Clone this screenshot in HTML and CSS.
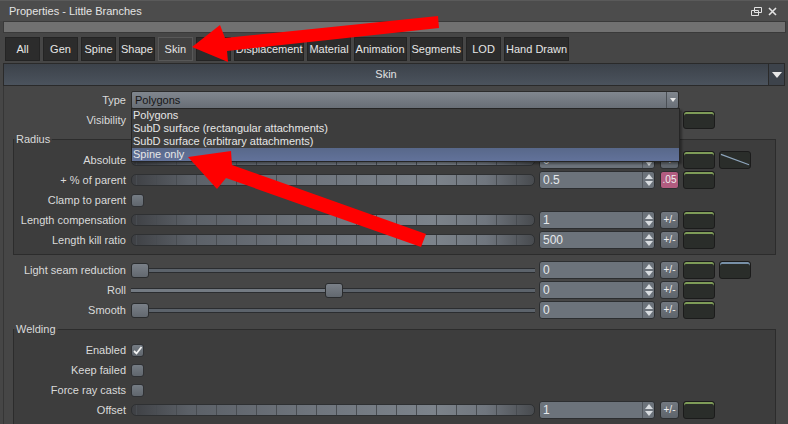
FILE: index.html
```html
<!DOCTYPE html>
<html>
<head>
    <title>Properties - Little Branches</title>
    <link rel="stylesheet" href="styles.css">
</head>
<body>
<div class="window">
    <div class="titlebar">
        <span class="title">Properties - Little Branches</span>
        <span class="win-buttons">
            <svg width="11" height="9" viewBox="0 0 11 9"><path d="M3.5 .5h7v5h-7z M.5 3.5h7v5h-7z" fill="none" stroke="#e2e2e2"/></svg>
            <svg width="9" height="9" viewBox="0 0 9 9"><path d="M1 1l7 7M8 1l-7 7" stroke="#e2e2e2" stroke-width="1.6"/></svg>
        </span>
    </div>
    <div class="topbar"></div>

    <div class="tabs">
        <button class="tab">All</button>
        <button class="tab">Gen</button>
        <button class="tab">Spine</button>
        <button class="tab">Shape</button>
        <button class="tab active">Skin</button>
        <button class="tab"></button>
        <button class="tab">Displacement</button>
        <button class="tab">Material</button>
        <button class="tab">Animation</button>
        <button class="tab">Segments</button>
        <button class="tab">LOD</button>
        <button class="tab">Hand Drawn</button>
    </div>

    <div class="section-head">
        <span class="section-title">Skin</span>
        <span class="head-drop"><span class="tri-down big"></span></span>
    </div>

    <div class="panel">
        <div class="row">
            <label class="lbl">Type</label>
            <div class="combo"><span class="combo-text">Polygons</span><span class="combo-arrow"><span class="tri-down"></span></span></div>
        </div>
        <div class="row">
            <label class="lbl">Visibility</label>
            <div class="combo"><span class="combo-text"></span><span class="combo-arrow"></span></div>
            <span class="key"></span>
        </div>

        <fieldset class="group">
            <legend>Radius</legend>
            <div class="row">
                <label class="lbl">Absolute</label>
                <div class="bar"></div>
                <div class="spin"><span class="spin-value">0</span><span class="spin-arrows"><i class="up"></i><i class="down"></i></span></div>
                <span class="pm">+/-</span>
                <span class="key"></span>
                <span class="key curve"><svg width="32" height="16" viewBox="0 0 32 16"><path d="M1 2L31 13" stroke="#8fa6bd" stroke-width="1.2"/></svg></span>
            </div>
            <div class="row">
                <label class="lbl">+ % of parent</label>
                <div class="bar"></div>
                <div class="spin"><span class="spin-value">0.5</span><span class="spin-arrows"><i class="up"></i><i class="down"></i></span></div>
                <span class="pm pink">.05</span>
                <span class="key"></span>
            </div>
            <div class="row">
                <label class="lbl">Clamp to parent</label>
                <span class="check"></span>
            </div>
            <div class="row">
                <label class="lbl">Length compensation</label>
                <div class="bar"></div>
                <div class="spin"><span class="spin-value">1</span><span class="spin-arrows"><i class="up"></i><i class="down"></i></span></div>
                <span class="pm">+/-</span>
                <span class="key"></span>
            </div>
            <div class="row">
                <label class="lbl">Length kill ratio</label>
                <div class="bar"></div>
                <div class="spin"><span class="spin-value">500</span><span class="spin-arrows"><i class="up"></i><i class="down"></i></span></div>
                <span class="pm">+/-</span>
                <span class="key"></span>
            </div>
        </fieldset>

        <div class="row">
            <label class="lbl">Light seam reduction</label>
            <div class="slider"><span class="handle"></span></div>
            <div class="spin"><span class="spin-value">0</span><span class="spin-arrows"><i class="up"></i><i class="down"></i></span></div>
            <span class="pm">+/-</span>
            <span class="key"></span>
            <span class="key blue"></span>
        </div>
        <div class="row">
            <label class="lbl">Roll</label>
            <div class="slider filled"><span class="handle" style="margin-left: 194px"></span></div>
            <div class="spin"><span class="spin-value">0</span><span class="spin-arrows"><i class="up"></i><i class="down"></i></span></div>
            <span class="pm">+/-</span>
            <span class="key"></span>
        </div>
        <div class="row">
            <label class="lbl">Smooth</label>
            <div class="slider"><span class="handle"></span></div>
            <div class="spin"><span class="spin-value">0</span><span class="spin-arrows"><i class="up"></i><i class="down"></i></span></div>
            <span class="pm">+/-</span>
            <span class="key"></span>
        </div>

        <fieldset class="group">
            <legend>Welding</legend>
            <div class="row">
                <label class="lbl">Enabled</label>
                <span class="check"><svg width="11" height="11" viewBox="0 0 11 11"><path d="M2 6l2.5 2.5L9.5 2" fill="none" stroke="#f2f2f2" stroke-width="1.8"/></svg></span>
            </div>
            <div class="row">
                <label class="lbl">Keep failed</label>
                <span class="check"></span>
            </div>
            <div class="row">
                <label class="lbl">Force ray casts</label>
                <span class="check"></span>
            </div>
            <div class="row">
                <label class="lbl">Offset</label>
                <div class="bar"></div>
                <div class="spin"><span class="spin-value">1</span><span class="spin-arrows"><i class="up"></i><i class="down"></i></span></div>
                <span class="pm">+/-</span>
                <span class="key"></span>
            </div>
        </fieldset>

        <!-- open combo list for Type -->
        <div class="popup">
            <div class="popup-item">Polygons</div>
            <div class="popup-item">SubD surface (rectangular attachments)</div>
            <div class="popup-item">SubD surface (arbitrary attachments)</div>
            <div class="popup-item sel">Spine only</div>
        </div>
    </div>

    <svg class="arrows" width="788" height="424" viewBox="0 0 788 424">
        <polygon fill="#ff0000" points="192,47 220,25 225,38 438,16 439,28 227,51 228,62"/>
        <polygon fill="#ff0000" points="188,157 231,151 232,165 426,234 421,247 226,178 217,189"/>
    </svg>
</div>
</body>
</html>
```

FILE: styles.css
```css
* {
    box-sizing: border-box;
}

body {
    margin: 0;
    background-color: #464646;
    font-family: "Liberation Sans", Arial, sans-serif;
    font-size: 11px;
    color: #dcdcdc;
    overflow: hidden;
}

.window {
    position: relative;
    width: 788px;
    height: 424px;
    overflow: hidden;
}

.titlebar {
    height: 21px;
    display: flex;
    align-items: center;
    justify-content: space-between;
    padding: 0 11px 0 9px;
    background-color: #4c4c4c;
    border-top: 1px solid #5a5a5a;
    color: #e4e4e4;
}

.win-buttons {
    display: flex;
    align-items: center;
    gap: 6px;
}

.topbar {
    height: 12px;
    margin: 0 2px 0 3px;
    background-color: #717171;
    border: 1px solid #3a3a3a;
}

.tabs {
    display: flex;
    gap: 3px;
    padding: 4px 5px 2px;
}

.tab {
    height: 24px;
    min-width: 35px;
    padding: 0 1px;
    background-color: #2c2c2c;
    border: 1px solid #242424;
    color: #e6e6e6;
    font: inherit;
}

.tab.active {
    background-color: #414141;
    border-color: #585858;
}

.section-head {
    display: flex;
    height: 23px;
    margin: 0 3px;
    border: 1px solid #2a2a2a;
    background: linear-gradient(#3c424a, #4b535d);
}

.section-title {
    flex: 1;
    text-align: center;
    line-height: 21px;
    color: #e2e2e2;
}

.head-drop {
    width: 16px;
    display: flex;
    align-items: center;
    justify-content: center;
    border-left: 1px solid #2a2a2a;
    background-color: #3d434b;
}

.tri-down {
    width: 0;
    height: 0;
    border-left: 3px solid transparent;
    border-right: 3px solid transparent;
    border-top: 4px solid #e8e8e8;
}

.tri-down.big {
    border-left-width: 5px;
    border-right-width: 5px;
    border-top-width: 6px;
}

.panel {
    position: relative;
    margin-left: 3px;
    height: 340px;
    padding-top: 4px;
    border-left: 1px solid #363636;
}

.row {
    display: flex;
    align-items: center;
    height: 20px;
}

.lbl {
    width: 122px;
    margin-right: 5px;
    text-align: right;
    white-space: nowrap;
    color: #dadada;
}

.group {
    min-width: 0;
    margin: 3px 12px 5px 9px;
    padding: 4px 0 4px 0;
    border: 1px solid #2c2c2c;
    background-color: #3d3d3d;
}

.group legend {
    padding: 0 2px;
    line-height: 13px;
    color: #dadada;
}

.group .lbl {
    width: 112px;
}

/* combo box */
.combo {
    width: 548px;
    height: 18px;
    display: flex;
    border: 1px solid #2b2b2b;
    border-radius: 2px;
    background: linear-gradient(#80868e, #686e76);
}

.combo-text {
    flex: 1;
    padding-left: 3px;
    line-height: 16px;
    color: #151515;
}

.combo-arrow {
    width: 12px;
    display: flex;
    align-items: center;
    justify-content: center;
    border-left: 1px solid #4a4f55;
}

.popup {
    position: absolute;
    left: 127px;
    top: 22px;
    width: 549px;
    border: 1px solid #252525;
    background-color: #3d3d3d;
    box-shadow: 2px 2px 2px rgba(0, 0, 0, 0.35);
}

.popup-item {
    height: 13px;
    line-height: 13px;
    padding-left: 1px;
    color: #e6e6e6;
    white-space: nowrap;
}

.popup-item.sel {
    background: linear-gradient(#58688a, #62729a);
}

/* segmented value bar */
.bar {
    width: 404px;
    height: 12px;
    border: 1px solid #2e3032;
    border-radius: 5px;
    background:
        repeating-linear-gradient(90deg, transparent 0 19px, #484c51 19px 20px),
        linear-gradient(90deg, #3e4044 0%, #5b6067 14%, #6f757d 45%, #7c838b 75%, #70767e 88%, #484b4f 100%);
    background-position: -15px 0, 0 0;
}

/* plain slider */
.slider {
    width: 404px;
    height: 15px;
    display: flex;
    align-items: center;
    background:
        linear-gradient(#5c636b, #5c636b) center / 100% 3px no-repeat,
        linear-gradient(#2b2d30, #2b2d30) center / 100% 5px no-repeat;
}

.slider.filled {
    background:
        linear-gradient(90deg, #737a82 0 50%, #5c636b 50%) center / 100% 3px no-repeat,
        linear-gradient(#2b2d30, #2b2d30) center / 100% 5px no-repeat;
}

.handle {
    width: 18px;
    height: 15px;
    border: 1px solid #2a2c2e;
    border-radius: 3px;
    background: linear-gradient(#7a8088, #62686f);
}

/* spin box */
.spin {
    width: 116px;
    height: 18px;
    margin-left: 4px;
    display: flex;
    border: 1px solid #2c2e30;
    border-radius: 3px;
    background-color: #6c737b;
}

.spin-value {
    flex: 1;
    padding-left: 3px;
    line-height: 16px;
    font-size: 12px;
    color: #e4e8ec;
}

.spin-arrows {
    width: 12px;
    display: flex;
    flex-direction: column;
    align-items: center;
    justify-content: center;
    gap: 2px;
    border-left: 1px solid #50555b;
}

.spin-arrows .up {
    border-left: 4px solid transparent;
    border-right: 4px solid transparent;
    border-bottom: 5px solid #d8dce0;
}

.spin-arrows .down {
    border-left: 4px solid transparent;
    border-right: 4px solid transparent;
    border-top: 5px solid #d8dce0;
}

.pm {
    width: 19px;
    height: 18px;
    margin-left: 5px;
    border: 1px solid #2c2e30;
    border-radius: 3px;
    background: linear-gradient(#737981, #5e646b);
    color: #eeeeee;
    text-align: center;
    line-height: 16px;
    font-size: 10px;
}

.pm.pink {
    background: #b25c80;
}

.key {
    width: 32px;
    height: 18px;
    margin-left: 4px;
    border: 1px solid #1b1b1b;
    border-radius: 3px;
    background-color: #2a2d2a;
    box-shadow: inset 0 2px 0 #7e9c58;
}

.key.blue {
    box-shadow: inset 0 2px 0 #7890a8;
}

.key.curve {
    box-shadow: none;
    display: flex;
}

.check {
    width: 13px;
    height: 13px;
    display: flex;
    align-items: center;
    justify-content: center;
    border: 1px solid #2f3134;
    border-radius: 3px;
    background: linear-gradient(#757c84, #60666d);
}

.arrows {
    position: absolute;
    left: 0;
    top: 0;
    pointer-events: none;
}
```
